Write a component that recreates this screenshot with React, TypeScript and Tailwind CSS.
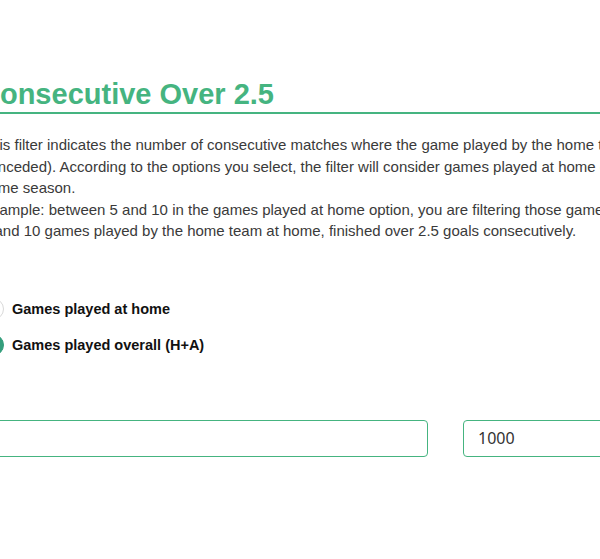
import React, { useState } from 'react';

const App = () => {
  const [scope, setScope] = useState<'home' | 'overall'>('overall');
  const [min, setMin] = useState('1');
  const [max, setMax] = useState('1000');

  const options = [
    { id: 'home' as const, label: 'Games played at home' },
    { id: 'overall' as const, label: 'Games played overall (H+A)' },
  ];

  return (
    <div className="w-[600px] h-[559px] overflow-hidden bg-white font-['Liberation_Sans',Arial,sans-serif]">
      <div className="ml-[-18px] w-[940px] pt-[77px]">
        {/* Title */}
        <h1 className="ml-[-3px] text-[29px] leading-[34px] font-bold text-[#45b480] pb-[1px] border-b-2 border-[#45b480]">
          Consecutive Over 2.5
        </h1>

        {/* Description */}
        <div className="mt-[20px] text-[15px] leading-[21.5px] text-[#3a3a3a] whitespace-nowrap">
          <p>This filter indicates the number of consecutive matches where the game played by the home team finished over 2.5 goals (scored +</p>
          <p>conceded). According to the options you select, the filter will consider games played at home or overall in the</p>
          <p>same season.</p>
          <p>Example: between 5 and 10 in the games played at home option, you are filtering those games where between</p>
          <p>5 and 10 games played by the home team at home, finished over 2.5 goals consecutively.</p>
        </div>

        {/* Options */}
        <div className="mt-[56px] flex flex-col gap-[14px]">
          {options.map((opt) => (
            <button
              key={opt.id}
              onClick={() => setScope(opt.id)}
              className="flex items-center gap-[8px] text-left"
            >
              <span
                className={`w-[22px] h-[22px] rounded-full border ${
                  scope === opt.id ? 'bg-[#349e7c] border-[#349e7c]' : 'bg-white border-[#d9d9d9]'
                }`}
              />
              <span className="text-[14.5px] leading-[22px] font-bold text-[#111]">{opt.label}</span>
            </button>
          ))}
        </div>

        {/* Range inputs */}
        <div className="ml-[-4px] mt-[64px] grid grid-cols-[450px_450px] gap-[35px]">
          <input
            value={min}
            onChange={(e) => setMin(e.target.value)}
            className="h-[37px] pl-[14px] pr-[14px] rounded-[4px] border border-[#45b480] outline-none text-[16px] text-[#333] font-['Noto_Sans',sans-serif]"
          />
          <input
            value={max}
            onChange={(e) => setMax(e.target.value)}
            className="h-[37px] px-[14px] rounded-[4px] border border-[#45b480] outline-none text-[16px] text-[#333] font-['Noto_Sans',sans-serif]"
          />
        </div>
      </div>
    </div>
  );
};

export default App;
